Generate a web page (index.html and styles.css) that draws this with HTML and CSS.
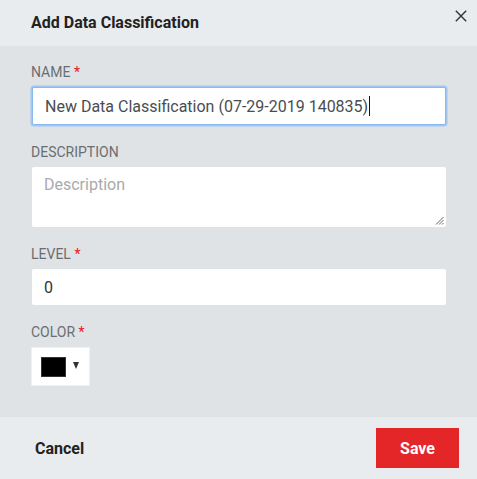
FILE: index.html
```html
<!DOCTYPE html>
<html>
<head>
<meta charset="utf-8">
<link rel="stylesheet" href="styles.css">
</head>
<body>
<div class="dialog">
  <div class="header">
    <div class="title">Add Data Classification</div>
    <button class="close" aria-label="Close">
      <svg width="12" height="12" viewBox="0 0 12 12"><path d="M0.8 0.8 L11.2 11.2 M11.2 0.8 L0.8 11.2" stroke="#333" stroke-width="1.4" fill="none"/></svg>
    </button>
  </div>
  <div class="body">
    <div class="group">
      <label class="label">Name <span class="req">*</span></label>
      <div class="input name focus"><span>New Data Classification (07-29-2019 140835)</span><span class="caret"></span></div>
    </div>
    <div class="group">
      <label class="label">Description</label>
      <div class="textarea"><span class="placeholder">Description</span>
        <svg class="grip" width="9" height="9" viewBox="0 0 9 9"><path d="M8.5 1 L1 8.5 M8.5 4 L4 8.5 M8.5 7 L7 8.5" stroke="#555" stroke-width="0.9"/></svg>
      </div>
    </div>
    <div class="group">
      <label class="label">Level <span class="req">*</span></label>
      <div class="input level">0</div>
    </div>
    <div class="group">
      <label class="label">Color <span class="req">*</span></label>
      <div class="picker"><span class="swatch"></span><span class="arrow"></span></div>
    </div>
  </div>
  <div class="footer">
    <button class="cancel">Cancel</button>
    <button class="save">Save</button>
  </div>
</div>
</body>
</html>
```

FILE: styles.css
```css
* { box-sizing: border-box; }
html, body { margin: 0; padding: 0; }
body {
  font-family: Roboto, "Liberation Sans", sans-serif;
  width: 477px;
  height: 479px;
  overflow: hidden;
}
.dialog {
  display: flex;
  flex-direction: column;
  height: 479px;
  background: #dfe3e6;
}
.header {
  height: 46px;
  background: #e9ecef;
  display: flex;
  align-items: flex-start;
  justify-content: space-between;
  padding-left: 31px;
}
.title {
  font-size: 16px;
  font-weight: 700;
  color: #222;
  line-height: 46px;
}
.close {
  border: 0;
  background: none;
  padding: 0;
  margin: 10px 10px 0 0;
  width: 12px;
  height: 12px;
  display: flex;
}
.body {
  flex: 1;
  padding: 18px 31px 0 31px;
}
.group { margin-bottom: 19px; }
.label {
  display: block;
  font-size: 14px;
  line-height: 16px;
  color: #6b6e71;
  text-transform: uppercase;
  margin-bottom: 7px;
}
.req { color: #f0141c; }
.input {
  background: #fff;
  border-radius: 2px;
  font-size: 16px;
  color: #4a4d50;
  padding: 0 12px;
  display: flex;
  align-items: center;
}
.name {
  height: 38px;
  margin-left: 1px;
  border: 1px solid #88b9ee;
  box-shadow: 0 0 0 1.5px rgba(140, 190, 245, 0.75);
  padding-left: 12px;
}
.caret {
  display: inline-block;
  width: 1px;
  height: 20px;
  background: #111;
  margin-left: 1px;
}
.level {
  height: 36px;
  margin-left: 1px;
  color: #333;
}
.textarea {
  position: relative;
  height: 60px;
  margin-left: 1px;
  background: #fff;
  border-radius: 2px;
  padding: 8px 12px;
  font-size: 16px;
  line-height: 19px;
}
.placeholder { color: #aaa; }
.grip {
  position: absolute;
  right: 2px;
  bottom: 2px;
}
.picker {
  width: 59px;
  height: 39px;
  background: #fff;
  border: 1px solid #eef0f1;
  display: flex;
  align-items: center;
  padding-left: 9px;
}
.swatch {
  width: 25px;
  height: 20px;
  background: #000;
  border: 1px solid #333;
}
.arrow {
  width: 0;
  height: 0;
  margin-left: 7px;
  margin-bottom: 3px;
  border-left: 3.5px solid transparent;
  border-right: 3.5px solid transparent;
  border-top: 7px solid #333;
}
.footer {
  height: 62px;
  background: #e9ecef;
  display: flex;
  align-items: center;
  justify-content: space-between;
  padding: 0 18px 0 35px;
}
.cancel {
  border: 0;
  background: none;
  padding: 0;
  font-family: Roboto, "Liberation Sans", sans-serif;
  font-size: 16px;
  font-weight: 700;
  color: #222;
}
.save {
  width: 83px;
  height: 40px;
  border: 0;
  background: #e52629;
  color: #fff;
  font-family: Roboto, "Liberation Sans", sans-serif;
  font-size: 16px;
  font-weight: 700;
}
```
